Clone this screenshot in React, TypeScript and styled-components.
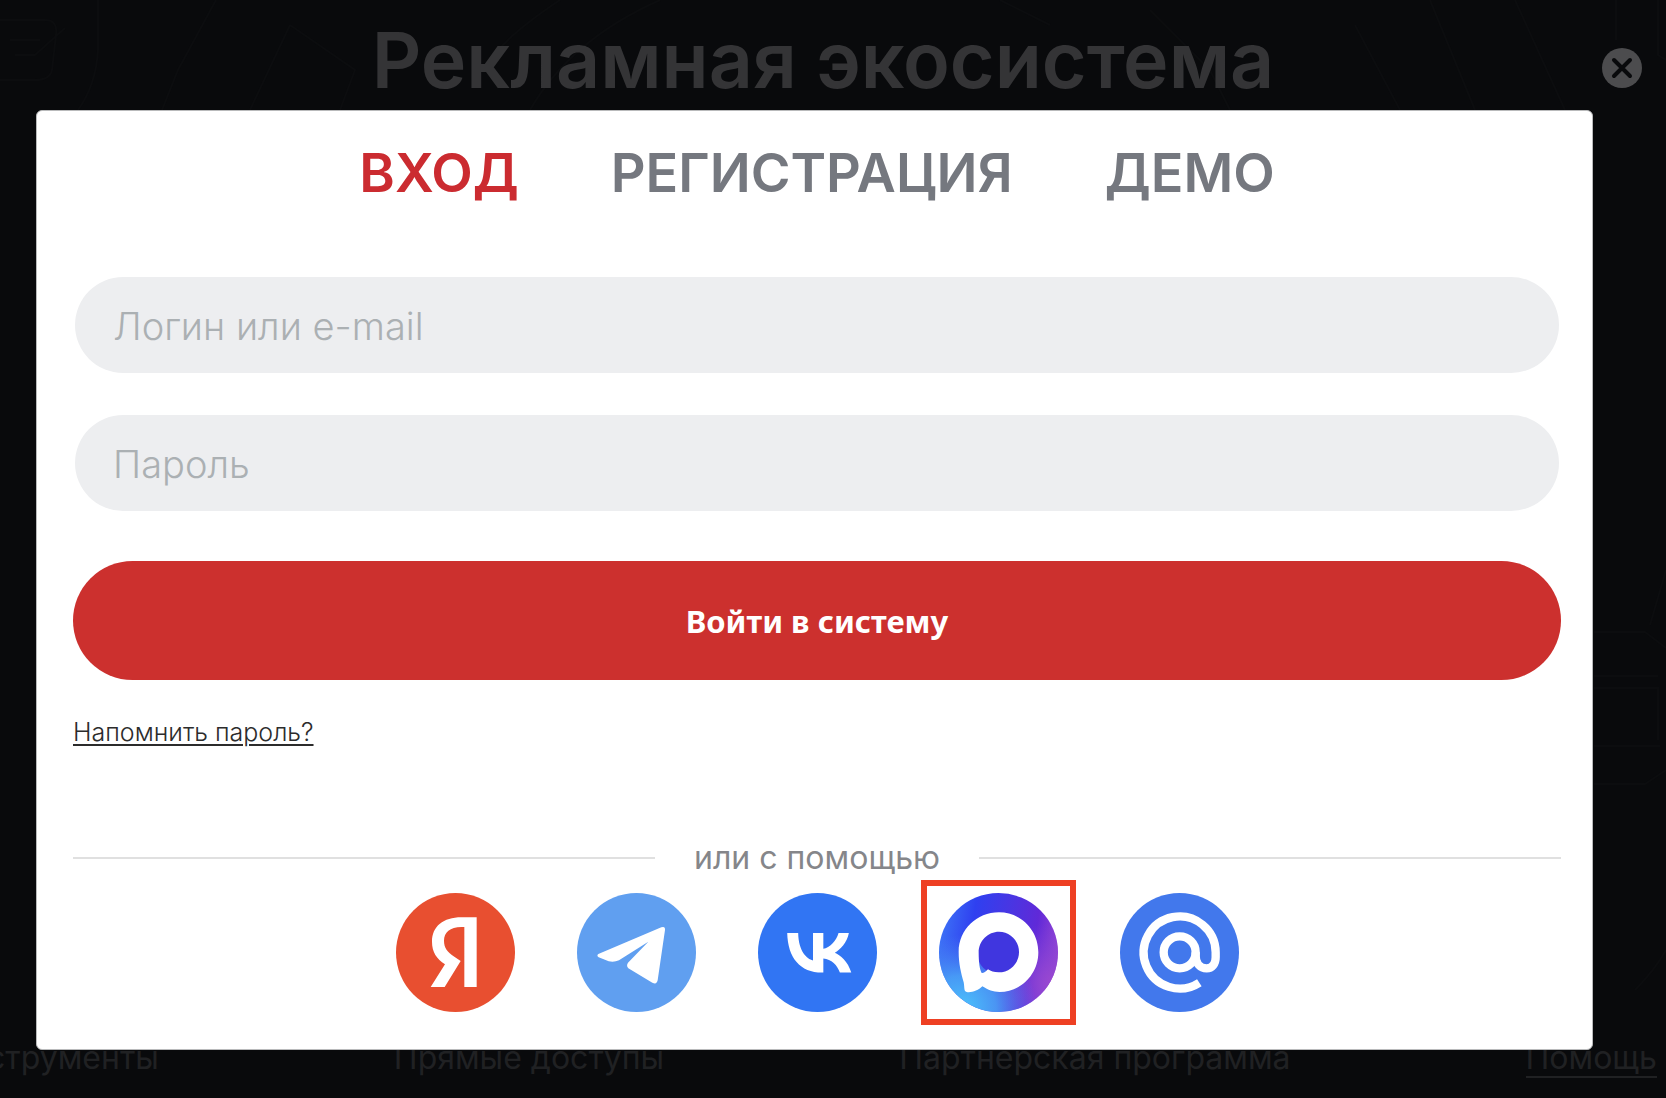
import React, { useState } from 'react';
import styled, { createGlobalStyle } from 'styled-components';

const GlobalStyle = createGlobalStyle`
  *, *::before, *::after { box-sizing: border-box; }
  body {
    margin: 0;
    background: #090a0c;
    font-family: Inter, "Open Sans", sans-serif;
    overflow-x: hidden;
  }
  button, input { font-family: inherit; }
`;

const Page = styled.div`
  position: relative;
  display: flex;
  flex-direction: column;
  justify-content: space-between;
  min-height: 100vh;
  overflow: hidden;
`;

const Pattern = styled.svg`
  position: absolute;
  inset: 0;
  width: 100%;
  height: 100%;
  fill: none;
  stroke: #0c0d0f;
  stroke-width: 2;
`;

const Title = styled.h1`
  position: relative;
  margin: 0;
  padding: 16px 36px 0 16px;
  font-size: 77px;
  line-height: 88px;
  font-weight: 600;
  text-align: center;
  color: #343436;
`;

const FooterNav = styled.nav`
  position: relative;
  display: flex;
  justify-content: space-between;
  margin-left: -56px;
  padding: 0 9px 20px 0;
`;

const FooterLink = styled.a<{ $underlined?: boolean }>`
  font-size: 32px;
  line-height: 36px;
  white-space: nowrap;
  color: #202123;
  text-decoration: none;
  border-bottom: 2px solid ${(p) => (p.$underlined ? '#202123' : 'transparent')};
`;

const Overlay = styled.div`
  position: absolute;
  inset: 0;
  padding: 110px 73px 0 36px;
`;

const CloseButton = styled.button`
  position: absolute;
  top: 48px;
  right: 24px;
  width: 40px;
  height: 40px;
  padding: 0;
  border: 0;
  border-radius: 50%;
  background: #4c4c4e;
  cursor: pointer;
  svg { display: block; width: 100%; height: 100%; }
`;

const Modal = styled.section`
  padding: 32px 31px 37px 36px;
  border: 1px solid #b9babb;
  border-radius: 6px;
  background: #fff;
`;

const Tabs = styled.div`
  display: flex;
  justify-content: center;
  gap: 92px;
  margin-bottom: 74px;
`;

const Tab = styled.button<{ $active: boolean }>`
  padding: 0;
  border: 0;
  background: none;
  font-size: 54px;
  line-height: 60px;
  font-weight: 600;
  color: ${(p) => (p.$active ? '#cb2b30' : '#75787f')};
  cursor: pointer;
`;

const Form = styled.form`
  display: flex;
  flex-direction: column;
`;

const Fields = styled.div`
  display: flex;
  flex-direction: column;
  gap: 42px;
  padding: 0 2px;
  margin-bottom: 50px;
`;

const Field = styled.input`
  width: 100%;
  height: 96px;
  padding: 2px 38px 0;
  border: 0;
  border-radius: 48px;
  outline: 0;
  background: #edeef0;
  font-size: 38px;
  font-weight: 300;
  color: #333;
  &::placeholder { color: #abb0b3; opacity: 1; }
`;

const SubmitButton = styled.button`
  height: 119px;
  border: 0;
  border-radius: 60px;
  background: #cc302e;
  font-family: "Noto Sans", "Open Sans", sans-serif;
  font-size: 31px;
  font-weight: 700;
  color: #fff;
  cursor: pointer;
`;

const RemindLink = styled.a`
  align-self: flex-start;
  margin-top: 38px;
  font-size: 25px;
  line-height: 28px;
  font-weight: 300;
  color: #2c2c2c;
  text-decoration-thickness: 2px;
  text-underline-offset: 3px;
`;

const Divider = styled.div`
  display: flex;
  align-items: center;
  gap: 39px;
  margin: 94px 0 17px;
  font-size: 32px;
  line-height: 36px;
  color: #85868a;
  &::before, &::after {
    content: "";
    flex: 1;
    height: 2px;
    background: #e0e0e0;
  }
`;

const Socials = styled.div`
  display: flex;
  justify-content: center;
  gap: 62px;
`;

const SocialButton = styled.button<{ $color: string; $highlighted?: boolean }>`
  position: relative;
  width: 119px;
  height: 119px;
  padding: 0;
  border: 0;
  border-radius: 50%;
  background: ${(p) => p.$color};
  cursor: pointer;
  svg { display: block; width: 100%; height: 100%; }
  &::after {
    content: "";
    display: ${(p) => (p.$highlighted ? 'block' : 'none')};
    position: absolute;
    inset: -13px -18px;
    border: 6px solid #ee4023;
  }
`;

const YandexLogo = () => (
  <svg viewBox="49 162 357 357" aria-hidden="true">
    <path
      fill="#fff"
      fillRule="evenodd"
      d="M291 235H245C191 235 157 262 157 308C157 340 171 359 196 376L153 444H195L243 366L224 353C203 339 193 327 193 305C193 280 211 264 245 264H254V444H291Z"
    />
  </svg>
);

const TelegramLogo = () => (
  <svg viewBox="590 162 357 357" aria-hidden="true">
    <path
      fill="#fff"
      d="M654 345L843 265Q855 261 854 273L832 424Q829 438 816 431L744 388Q737 380 743 371L804 308L716 364Q701 371 685 367L655 355Q648 350 654 345Z"
    />
  </svg>
);

const VkLogo = () => (
  <svg viewBox="0 0 357 357" aria-hidden="true">
    <path
      fill="#fff"
      transform="translate(39 33) scale(6 5.95)"
      d="M25.54 34.58c-10.93 0-17.17-7.5-17.43-19.98h5.48c.18 9.16 4.22 13.04 7.42 13.84V14.6h5.16v7.9c3.16-.34 6.48-3.94 7.6-7.9h5.16c-.86 4.88-4.46 8.48-7.02 9.96 2.56 1.2 6.66 4.34 8.22 10.02h-5.68c-1.22-3.8-4.26-6.74-8.28-7.14v7.14z"
    />
  </svg>
);

const MaxLogo = () => (
  <svg viewBox="354 162 357 357" aria-hidden="true">
    <defs>
      <linearGradient id="max-base" x1="0" y1="0.45" x2="1" y2="0.6">
        <stop offset="0" stopColor="#3c6ff6" />
        <stop offset="0.25" stopColor="#2f40f0" />
        <stop offset="0.55" stopColor="#4a35e2" />
        <stop offset="0.78" stopColor="#6029d8" />
        <stop offset="1" stopColor="#9a48d2" />
      </linearGradient>
      <radialGradient id="max-cyan" cx="0.2" cy="0.97" r="0.62">
        <stop offset="0" stopColor="#4cc4fb" />
        <stop offset="0.45" stopColor="#4ba6f6" stopOpacity="0.85" />
        <stop offset="1" stopColor="#4b80f0" stopOpacity="0" />
      </radialGradient>
      <radialGradient id="max-violet" cx="0.95" cy="0.75" r="0.5">
        <stop offset="0" stopColor="#9a48d0" />
        <stop offset="1" stopColor="#7a40d8" stopOpacity="0" />
      </radialGradient>
    </defs>
    <circle cx="532.5" cy="340.5" r="178.5" fill="url(#max-base)" />
    <circle cx="532.5" cy="340.5" r="178.5" fill="url(#max-violet)" />
    <circle cx="532.5" cy="340.5" r="178.5" fill="url(#max-cyan)" />
    <circle cx="534" cy="340" r="66" fill="#4036df" />
    <path
      fill="#fff"
      fillRule="evenodd"
      d="M534 220C600 220 652 273 652 340C652 406 600 459 536 459C515 459 503 453 484 442C472 455 450 462 437 459C428 458 431 445 428 430C420 400 413 375 413 338C413 273 467 220 534 220ZM534 278C501 278 473 305 473 340C473 370 476 393 482 402C487 403 494 399 501 391C510 396 518 400 533 400C567 400 594 373 594 339C594 305 567 278 534 278Z"
    />
  </svg>
);

const MailLogo = () => (
  <svg viewBox="895 162 357 357" fill="none" stroke="#fff" strokeWidth="25" aria-hidden="true">
    <circle cx="1074" cy="340" r="48" />
    <path d="M1133 431A108 108 0 1 1 1182 340V355C1182 375 1171 388 1155 388C1136 388 1122 374 1122 350V340" />
  </svg>
);

const tabs = ['ВХОД', 'РЕГИСТРАЦИЯ', 'ДЕМО'];

const socials = [
  { name: 'Яндекс', color: '#e84f30', Logo: YandexLogo },
  { name: 'Telegram', color: '#609ff0', Logo: TelegramLogo },
  { name: 'VK', color: '#3175f3', Logo: VkLogo },
  { name: 'MAX', color: 'transparent', Logo: MaxLogo, highlighted: true },
  { name: 'Mail', color: '#4278ec', Logo: MailLogo },
];

export default function App() {
  const [active, setActive] = useState(tabs[0]);
  return (
    <>
      <GlobalStyle />
      <Page>
        <Pattern aria-hidden="true">
          <path d="M0 20H45Q58 20 56 35L52 70Q50 80 35 80H0M10 40H40M15 55H35L65 28M98 0V50Q96 85 78 110M216 0L178 70L162 110M290 25L250 110M290 25L355 70L340 110M560 0Q500 40 488 65M660 0Q570 40 530 110M1000 0L1050 25M1150 10L1210 70L1230 110M1355 25L1400 110M1430 0L1475 110M1515 0L1565 110M1616 0V40M1658 0V55L1666 60" />
          <path d="M1594 632H1645L1666 648M1594 676H1658M1594 688H1658V740M1594 746H1660M1594 784H1645L1666 770M1666 570L1650 625M1666 950Q1655 970 1635 990" />
        </Pattern>
        <Title>Рекламная экосистема</Title>
        <FooterNav>
          <FooterLink href="#tools">Инструменты</FooterLink>
          <FooterLink href="#access">Прямые доступы</FooterLink>
          <FooterLink href="#partners">Партнерская программа</FooterLink>
          <FooterLink href="#help" $underlined>Помощь</FooterLink>
        </FooterNav>
        <Overlay>
          <CloseButton type="button" aria-label="Закрыть">
            <svg viewBox="0 0 40 40" stroke="#090a0c" strokeWidth="4" strokeLinecap="round" aria-hidden="true">
              <path d="M12 12L28 28M28 12L12 28" />
            </svg>
          </CloseButton>
          <Modal role="dialog" aria-modal="true" aria-label="Вход">
            <Tabs role="tablist">
              {tabs.map((t) => (
                <Tab key={t} type="button" role="tab" aria-selected={t === active} $active={t === active} onClick={() => setActive(t)}>
                  {t}
                </Tab>
              ))}
            </Tabs>
            <Form onSubmit={(e) => e.preventDefault()}>
              <Fields>
                <Field type="text" name="login" aria-label="Логин или e-mail" placeholder="Логин или e-mail" />
                <Field type="password" name="password" aria-label="Пароль" placeholder="Пароль" />
              </Fields>
              <SubmitButton type="submit">Войти в систему</SubmitButton>
              <RemindLink href="#remind">Напомнить пароль?</RemindLink>
            </Form>
            <Divider>или с помощью</Divider>
            <Socials>
              {socials.map(({ name, color, Logo, highlighted }) => (
                <SocialButton key={name} type="button" aria-label={name} $color={color} $highlighted={highlighted}>
                  <Logo />
                </SocialButton>
              ))}
            </Socials>
          </Modal>
        </Overlay>
      </Page>
    </>
  );
}
